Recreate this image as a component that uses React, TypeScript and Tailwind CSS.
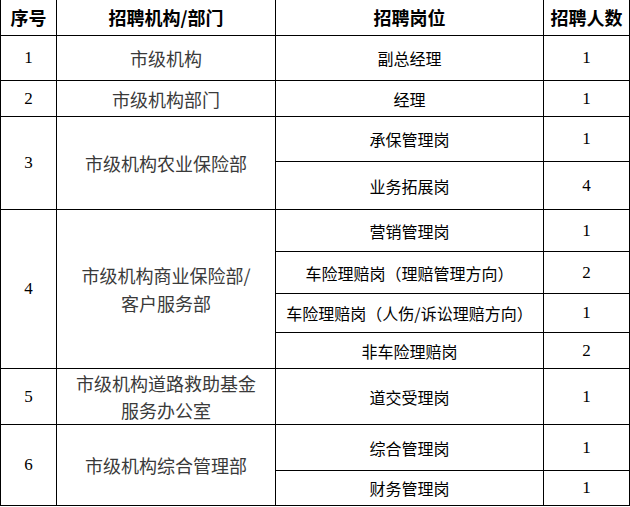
import React from "react";

const cell = "flex items-center justify-center bg-white text-center";
const cjk = "font-['Noto_Sans_CJK_SC',sans-serif]";
const num = "font-['Liberation_Serif','Noto_Sans_CJK_SC',serif] text-[17px] text-black";

function H({ children }: { children: React.ReactNode }) {
  return (
    <div className={`${cell} ${cjk} text-[18px] font-bold text-black`}>{children}</div>
  );
}

function N({ children, span = "" }: { children: React.ReactNode; span?: string }) {
  return <div className={`${cell} ${num} ${span}`}>{children}</div>;
}

function Org({ children, span = "" }: { children: React.ReactNode; span?: string }) {
  return (
    <div className={`${cell} ${cjk} ${span} text-[18px] leading-[28px] text-[#3a3a3a]`}>
      {children}
    </div>
  );
}

function Pos({ children }: { children: React.ReactNode }) {
  return <div className={`${cell} ${cjk} text-[16px] text-black`}>{children}</div>;
}

export default function App() {
  return (
    <div className="w-[630px] h-[507px] bg-white">
      <div className="grid grid-cols-[55px_218px_267px_85px] grid-rows-[35px_44px_35px_44px_47px_41px_41px_38px_35px_55px_45px_34px] gap-px bg-black px-px pb-px w-[630px]">
        <H>序号</H>
        <H>招聘机构/部门</H>
        <H>招聘岗位</H>
        <H>招聘人数</H>

        <N>1</N>
        <Org>市级机构</Org>
        <Pos>副总经理</Pos>
        <N>1</N>

        <N>2</N>
        <Org>市级机构部门</Org>
        <Pos>经理</Pos>
        <N>1</N>

        <N span="row-span-2">3</N>
        <Org span="row-span-2">市级机构农业保险部</Org>
        <Pos>承保管理岗</Pos>
        <N>1</N>
        <Pos>业务拓展岗</Pos>
        <N>4</N>

        <N span="row-span-4">4</N>
        <Org span="row-span-4">
          市级机构商业保险部/
          <br />
          客户服务部
        </Org>
        <Pos>营销管理岗</Pos>
        <N>1</N>
        <Pos>车险理赔岗（理赔管理方向）</Pos>
        <N>2</N>
        <Pos>车险理赔岗（人伤/诉讼理赔方向）</Pos>
        <N>1</N>
        <Pos>非车险理赔岗</Pos>
        <N>2</N>

        <N>5</N>
        <Org>
          <span className="leading-[27px]">
            市级机构道路救助基金
            <br />
            服务办公室
          </span>
        </Org>
        <Pos>道交受理岗</Pos>
        <N>1</N>

        <N span="row-span-2">6</N>
        <Org span="row-span-2">市级机构综合管理部</Org>
        <Pos>综合管理岗</Pos>
        <N>1</N>
        <Pos>财务管理岗</Pos>
        <N>1</N>
      </div>
    </div>
  );
}
